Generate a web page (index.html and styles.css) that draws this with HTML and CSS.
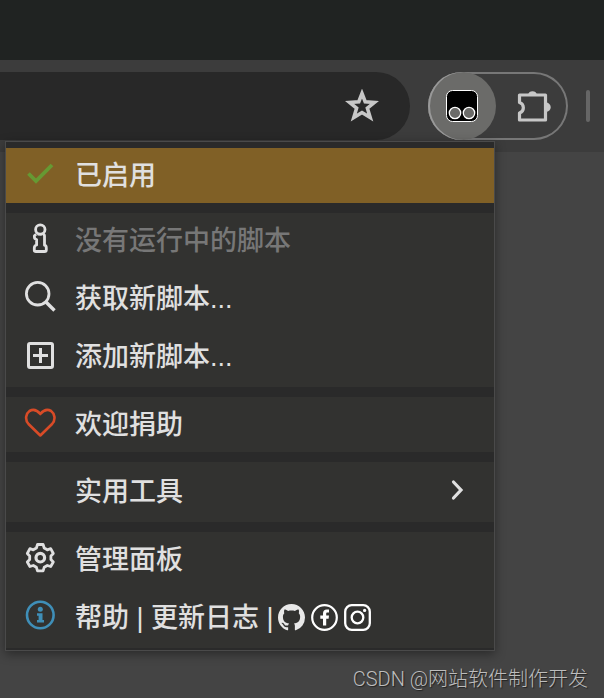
FILE: index.html
```html
<!DOCTYPE html>
<html lang="zh-CN">
<head>
    <meta charset="UTF-8">
    <meta name="viewport" content="width=device-width, initial-scale=1.0">
    <title>Tampermonkey</title>
    <link rel="stylesheet" href="styles.css">
</head>
<body>

    <div class="tab-strip"></div>

    <header class="toolbar">
        <div class="address-bar">
            <input type="text" class="address-input" aria-label="地址栏">
            <button type="button" class="star-button" aria-label="收藏">
                <svg width="34" height="34" viewBox="0 0 34 34">
                    <path d="M17 4.5 L20.2 12.7 L29.500 13.4 L22.400 19.2 L25.2 28.5 L17 23.500 L8.800 28.5 L11.600 19.2 L4.500 13.4 L13.8 12.7 Z" fill="none" stroke="#c7c7c7" stroke-width="3.6"/>
                </svg>
            </button>
        </div>

        <div class="extensions">
            <button type="button" class="extension-active" aria-label="Tampermonkey">
                <svg width="32" height="32" viewBox="0 0 32 32">
                    <rect x="0.5" y="0.5" width="31" height="31" rx="6" fill="#000" stroke="#fff"/>
                    <circle cx="9" cy="23" r="5.7" fill="#6b6b69" stroke="#fff" stroke-width="1.3"/>
                    <circle cx="23" cy="23" r="5.7" fill="#6b6b69" stroke="#fff" stroke-width="1.3"/>
                </svg>
            </button>
            <button type="button" class="extension-list" aria-label="扩展程序">
                <svg width="36" height="36" viewBox="0 0 36 36">
                    <path d="M3.500 7 H29.500 V32 H3.500 V25 A5.500 5.500 0 0 0 3.500 14.500 Z" fill="none" stroke="#c7c7c7" stroke-width="3.200" stroke-linejoin="round"/>
                    <path d="M12 6.500 A4.700 4.700 0 0 1 21 6.500 Z M30 14.500 A4.700 4.700 0 0 1 30 24 Z" fill="#c7c7c7"/>
                </svg>
            </button>
        </div>

        <div class="divider"></div>
    </header>

    <main class="page">
        <p class="watermark">CSDN @网站软件制作开发</p>

        <!-- Extension popup -->
        <nav class="menu">
            <div class="group">
                <button type="button" class="item enabled">
                    <svg class="icon" viewBox="0 0 32 32">
                        <path d="M4.500 16.500 L12 24 L28 8" fill="none" stroke="#669933" stroke-width="3.8"/>
                    </svg>
                    <span>已启用</span>
                </button>
            </div>

            <div class="group list">
                <button type="button" class="item" disabled>
                    <svg class="icon" viewBox="0 0 32 32">
                        <g fill="none" stroke="#e0e0e0" stroke-width="2.800" stroke-linejoin="round">
                            <circle cx="16.300" cy="7.500" r="4.700"/>
                            <path d="M12.500 12.500 Q10 13 10.400 15 Q10.400 17 12.600 17.500 V23 Q10.300 23.500 10.300 26 V28.500 Q10.300 29.500 12 29.500 H20.500 Q22.300 29.500 22.300 28 V26 Q22.300 23.500 20.500 23.200 V14 Q20.500 12.500 19 12.500"/>
                            <path d="M13.500 12.500 H18.500" stroke-width="2"/>
                        </g>
                    </svg>
                    <span>没有运行中的脚本</span>
                </button>
                <button type="button" class="item">
                    <svg class="icon" viewBox="0 0 32 32">
                        <g fill="none" stroke="#e0e0e0" stroke-width="2.800">
                            <circle cx="13.700" cy="13.700" r="11.300"/>
                            <path d="M21.700 21.700 L30.500 30.500" stroke-width="3.400"/>
                        </g>
                    </svg>
                    <span>获取新脚本...</span>
                </button>
                <button type="button" class="item">
                    <svg class="icon" viewBox="0 0 32 32">
                        <g fill="none" stroke="#e0e0e0" stroke-width="3">
                            <rect x="4.500" y="5.500" width="24" height="24" rx="1.500"/>
                            <path d="M16.500 10 V25 M9 17.500 H24"/>
                        </g>
                    </svg>
                    <span>添加新脚本...</span>
                </button>
            </div>

            <div class="group">
                <a href="#donate" class="item">
                    <svg class="icon" viewBox="0 0 32 32">
                        <path d="M16.300 29.500 L4.500 18 C0.500 13.500 2 7.500 5.500 5 C9.500 2.800 13 4 16.300 8 C19.600 4 23.100 2.800 27.100 5 C30.600 7.500 32.100 13.500 28.100 18 Z" fill="none" stroke="#d84b27" stroke-width="2.600" stroke-linejoin="round"/>
                    </svg>
                    <span>欢迎捐助</span>
                </a>
            </div>

            <div class="group">
                <button type="button" class="item submenu">
                    <span class="icon"></span>
                    <span>实用工具</span>
                    <svg class="arrow" width="14" height="22" viewBox="0 0 14 22">
                        <path d="M3.500 3 L11 11 L3.500 19" fill="none" stroke="#e0e0e0" stroke-width="3.200" stroke-linecap="round"/>
                    </svg>
                </button>
            </div>

            <div class="group list">
                <a href="#dashboard" class="item">
                    <svg class="icon" viewBox="0 0 32 32">
                        <g fill="none" stroke="#e0e0e0" stroke-width="2.800" stroke-linejoin="round">
                            <path d="M13.500 3.500 H19.100 L20.200 7 L23.300 8.800 L26.700 7.700 L29.300 12.500 L26.900 15 V18.500 L29.300 21 L26.700 25.500 L23.300 24.500 L20.200 26.300 L19.100 29.800 H13.500 L12.400 26.300 L9.300 24.500 L5.900 25.500 L3.300 21 L5.700 18.500 V15 L3.300 12.500 L5.900 7.700 L9.300 8.800 L12.400 7 Z"/>
                            <circle cx="16.300" cy="16.700" r="4.300" stroke-width="3.200"/>
                        </g>
                    </svg>
                    <span>管理面板</span>
                </a>
                <div class="item">
                    <svg class="icon" viewBox="0 0 32 32">
                        <circle cx="16.300" cy="16" r="13.300" fill="none" stroke="#3f8fb8" stroke-width="2.600"/>
                        <circle cx="16.300" cy="10.300" r="2.500" fill="#3f8fb8"/>
                        <path d="M13 14.200 H18.500 V21 H20 V23.500 H13 V21 H14.600 V16.700 H13 Z" fill="#3f8fb8"/>
                    </svg>
                    <span><a href="#help">帮助</a> | <a href="#changelog">更新日志</a> |</span>
                    <span class="social">
                        <a href="#github" aria-label="GitHub">
                            <svg width="27" height="27" viewBox="0 0 16 16">
                                <path fill="#e8e8e8" d="M8 0C3.580 0 0 3.580 0 8c0 3.540 2.290 6.530 5.470 7.590.4.070.55-.17.55-.38 0-.19-.01-.82-.01-1.490-2.010.37-2.530-.49-2.690-.94-.09-.23-.48-.94-.82-1.130-.28-.15-.68-.52-.01-.53.63-.01 1.080.58 1.230.82.72 1.210 1.870.87 2.330.66.07-.52.28-.87.51-1.070-1.780-.2-3.640-.89-3.640-3.950 0-.87.31-1.590.82-2.150-.08-.2-.36-1.020.08-2.120 0 0 .67-.21 2.200.82.64-.18 1.320-.27 2-.27s1.360.09 2 .27c1.530-1.040 2.200-.82 2.200-.82.44 1.100.16 1.920.08 2.120.51.56.82 1.270.82 2.150 0 3.070-1.870 3.750-3.650 3.950.29.25.54.73.54 1.480 0 1.070-.01 1.930-.01 2.200 0 .21.15.46.55.38A8.010 8.010 0 0 0 16 8c0-4.420-3.580-8-8-8z"/>
                            </svg>
                        </a>
                        <a href="#facebook" aria-label="Facebook">
                            <svg width="27" height="27" viewBox="0 0 27 27">
                                <circle cx="13.500" cy="13.500" r="12.300" fill="none" stroke="#fff" stroke-width="2.200"/>
                                <path d="M12 21.500 V14.700 H9.300 V11.500 H12 V9.500 C12 6.800 13.500 5.500 15.700 5.500 H18 V8.500 H16.500 C15.500 8.500 15.200 9 15.200 9.800 V11.500 H18 L17.600 14.700 H15.200 V21.500 Z" fill="#fff"/>
                            </svg>
                        </a>
                        <a href="#instagram" aria-label="Instagram">
                            <svg width="27" height="27" viewBox="0 0 27 27">
                                <rect x="1.200" y="1.200" width="24.600" height="24.600" rx="6.500" fill="none" stroke="#fff" stroke-width="2.300"/>
                                <circle cx="13.500" cy="13.500" r="5.800" fill="none" stroke="#fff" stroke-width="2.300"/>
                                <circle cx="20.600" cy="6.400" r="1.600" fill="#fff"/>
                            </svg>
                        </a>
                    </span>
                </div>
            </div>
        </nav>
    </main>

</body>
</html>
```
FILE: styles.css
```css
/* General page styling */
* {
    box-sizing: border-box;
}

body {
    display: flex;
    flex-direction: column;
    min-height: 100vh;
    margin: 0;
    font-family: "Liberation Sans", "Noto Sans CJK SC", sans-serif;
    background-color: #444444;
    color: #e0e0e0;
}

button {
    padding: 0;
    border: none;
    background: none;
    color: inherit;
    font: inherit;
    text-align: left;
    cursor: pointer;
}

a {
    color: inherit;
    text-decoration: none;
}

svg {
    display: block;
}

/* Browser bars */
.tab-strip {
    height: 60px;
    background: #202322;
}

.toolbar {
    display: flex;
    align-items: center;
    gap: 18px;
    padding: 12px 14px 12px 0;
    background: #3c3c3c;
}

.address-bar {
    display: flex;
    flex: 1;
    align-items: center;
    min-width: 0;
    height: 68px;
    padding-right: 31px;
    background: #282828;
    border-radius: 0 34px 34px 0;
}

.address-input {
    flex: 1;
    min-width: 0;
    padding: 0 20px;
    border: none;
    outline: none;
    background: none;
    color: #e0e0e0;
    font-size: 27px;
}

/* Extension buttons */
.extensions {
    display: flex;
    flex: none;
    width: 140px;
    height: 68px;
    border-radius: 34px;
    box-shadow: inset 0 0 0 2px #777777;
}

.extension-active {
    display: grid;
    place-items: center;
    width: 68px;
    border-radius: 50%;
    background: #6b6b69;
    box-shadow: inset 2px 0 0 #999999;
}

.extension-list {
    display: grid;
    flex: 1;
    place-items: center;
    padding-left: 3px;
}

.divider {
    flex: none;
    width: 4px;
    height: 32px;
    border-radius: 2px;
    background: #666666;
}

/* Page below the toolbar */
.page {
    position: relative;
    display: flex;
    flex: 1;
    align-items: flex-end;
    justify-content: flex-end;
    padding: 0 16px 6px;
}

.watermark {
    margin: 0;
    color: #bdbdbd;
    font-family: Roboto, "Noto Sans CJK SC", sans-serif;
    font-size: 20px;
    font-weight: 300;
    text-shadow: 1px 1px 1px #222222;
}

/* Popup menu */
.menu {
    position: absolute;
    top: -11px;
    left: 5px;
    display: flex;
    flex-direction: column;
    gap: 10px;
    width: calc(100% - 114px);
    padding: 6px 0 2px;
    border: 1px solid #4a4a4a;
    background: #2a2a2a;
    box-shadow: 0 3px 10px rgba(0, 0, 0, 0.4);
    font-size: 27px;
    font-weight: 500;
    line-height: 40px;
    white-space: nowrap;
}

.group {
    display: flex;
    flex-direction: column;
    background: #323230;
}

.list {
    gap: 3px;
    padding-bottom: 3px;
}

.item {
    display: flex;
    align-items: center;
    gap: 19px;
    height: 55px;
    padding: 0 30px 0 18px;
}

.item:disabled {
    color: #777777;
}

.enabled {
    background: #806026;
}

.submenu {
    height: 60px;
}

.icon {
    flex: none;
    width: 32px;
    height: 32px;
    margin-bottom: 5px;
}

.arrow {
    margin-left: auto;
    margin-bottom: 4px;
}

.social {
    display: flex;
    gap: 6px;
    margin-left: -15px;
}
```
